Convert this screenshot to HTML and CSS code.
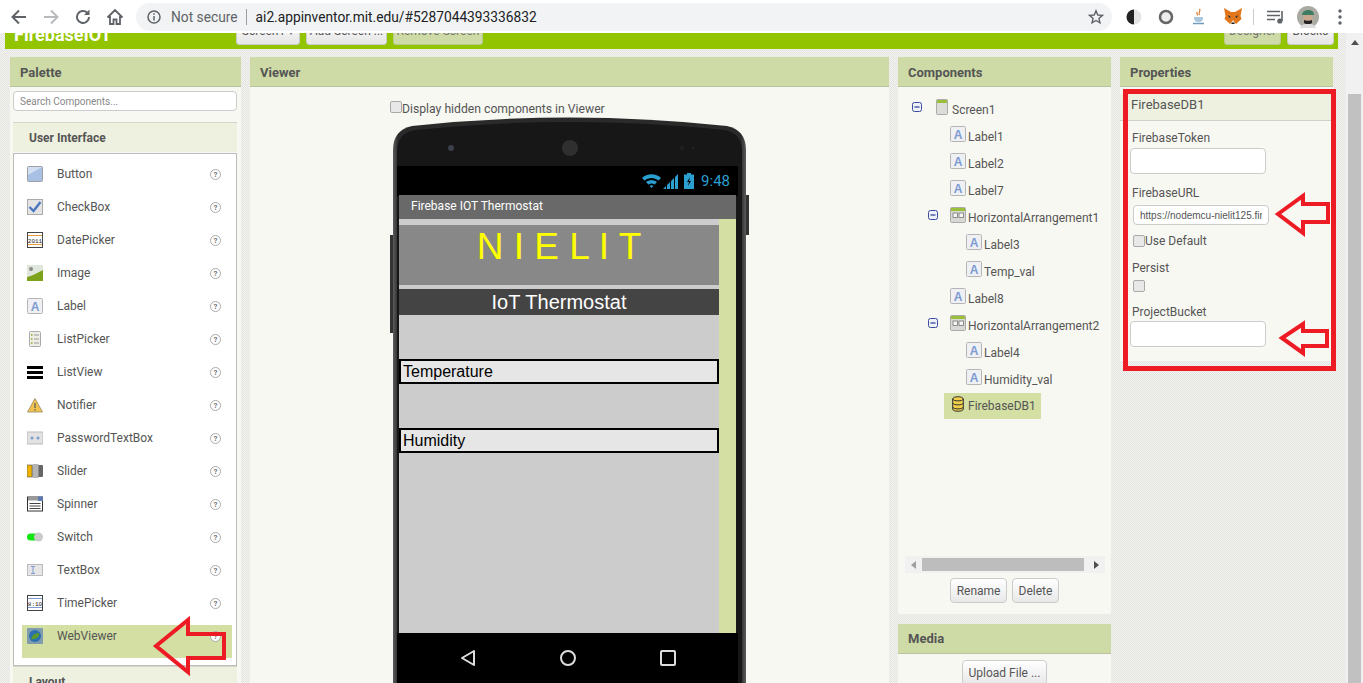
FILE: index.html
```html
<!DOCTYPE html>
<html lang="en">
<head>
    <meta charset="UTF-8">
    <meta name="viewport" content="width=device-width, initial-scale=1.0">
    <title>MIT App Inventor</title>
    <link rel="stylesheet" href="styles.css">
</head>
<body>
    <!-- icons used more than once -->
    <svg class="defs" width="0" height="0">
        <symbol id="ic-label" viewBox="0 0 16 16">
            <rect x="0.5" y="0.5" width="15" height="15" rx="1" fill="#eef0f4" stroke="#b5b5b5"/>
            <text x="8" y="12.5" text-anchor="middle" font-family="Liberation Sans" font-weight="700" font-size="12" fill="#7d9bd0">A</text>
        </symbol>
        <symbol id="ic-arrange" viewBox="0 0 16 16">
            <rect x="0.5" y="0.5" width="15" height="15" rx="1" fill="#d8d8d4" stroke="#aaa"/>
            <rect x="1" y="1" width="14" height="3" fill="#9cbf3a"/>
            <rect x="3" y="6" width="4.500" height="4.500" fill="#f4f4f4" stroke="#777" stroke-width="0.8"/>
            <rect x="9" y="6" width="4.500" height="4.500" fill="#f4f4f4" stroke="#777" stroke-width="0.8"/>
        </symbol>
        <symbol id="ic-minus" viewBox="0 0 10 10">
            <rect x="0.5" y="0.5" width="9" height="9" rx="2" fill="#eef0fa" stroke="#3a4aa0"/>
            <path d="M2.500 5h5" stroke="#2a3a90" stroke-width="1.200"/>
        </symbol>
    </svg>

    <div class="browser-bar">
        <svg class="nav-ic" width="18" height="18" viewBox="0 0 18 18"><path d="M16 9H3M9 2.500 2.500 9 9 15.500" fill="none" stroke="#5f6368" stroke-width="2"/></svg>
        <svg class="nav-ic" width="18" height="18" viewBox="0 0 18 18"><path d="M2 9h13M9 2.500 15.500 9 9 15.500" fill="none" stroke="#b8babd" stroke-width="2"/></svg>
        <svg class="nav-ic" width="18" height="18" viewBox="0 0 18 18"><path d="M15 9a6 6 0 1 1-1.800-4.300" fill="none" stroke="#5f6368" stroke-width="2"/><path d="M15.500 1.500v5.500h-5.500z" fill="#5f6368"/></svg>
        <svg class="nav-ic" width="18" height="18" viewBox="0 0 18 18"><path d="M1.500 9.500 9 2l7.500 7.500M4 8v8h3.500v-4.500h3V16H14V8" fill="none" stroke="#5f6368" stroke-width="1.800"/></svg>
        <div class="omnibox">
            <svg width="14" height="14" viewBox="0 0 14 14"><circle cx="7" cy="7" r="6" fill="none" stroke="#5f6368" stroke-width="1.500"/><path d="M7 6v4.500M7 3.300v1.500" stroke="#5f6368" stroke-width="1.500"/></svg>
            <span class="not-secure">Not secure</span>
            <span class="omni-sep"></span>
            <span class="url">ai2.appinventor.mit.edu/#5287044393336832</span>
            <svg class="star" width="16" height="16" viewBox="0 0 16 16"><path d="M8 1.800 9.800 6l4.600.4-3.500 3 1.100 4.500L8 11.500l-4 2.400 1.100-4.500-3.500-3L6.200 6z" fill="none" stroke="#5f6368" stroke-width="1.400"/></svg>
        </div>
        <div class="extensions">
            <svg class="ext-half" width="16" height="16" viewBox="0 0 16 16"><circle cx="8" cy="8" r="7.500" fill="#e4e4e4"/><path d="M8 .5a7.500 7.500 0 0 0 0 15z" fill="#222"/></svg>
            <svg class="ext-ring" width="16" height="16" viewBox="0 0 16 16"><circle cx="8" cy="8" r="6" fill="#eee" stroke="#666" stroke-width="2.500"/></svg>
            <svg class="ext-java" width="16" height="18" viewBox="0 0 16 18"><path d="M8.500 1c2 2-2 3 0 6M6 4c-1 1.500 1 2 .5 3.500" fill="none" stroke="#d9752a" stroke-width="1.200"/><path d="M3 9h9c0 4-1.500 5-4.500 5S3 13 3 9z" fill="#a9c6dc"/><path d="M2 15.500h11" stroke="#6e9cbd" stroke-width="1.500"/></svg>
            <svg class="ext-fox" width="18" height="17" viewBox="0 0 18 17"><path d="M0 0l7 4h4l7-4-1.500 8 1 3L12 16H6l-5.500-5 1-3z" fill="#e2761b"/><path d="M6 16l3-4 3 4z" fill="#f5e4d0"/><path d="M4 7l3 2-2 1zM14 7l-3 2 2 1z" fill="#233447"/><path d="M7.500 14.500h3V16h-3z" fill="#222"/></svg>
            <span class="ext-sep"></span>
            <svg class="ext-list" width="18" height="14" viewBox="0 0 18 14"><path d="M0 1.500h13M0 5.500h13M0 9.500h8" stroke="#5f6368" stroke-width="1.600"/><path d="M15 1v10" stroke="#5f6368" stroke-width="1.600"/><circle cx="12.800" cy="11" r="2.600" fill="#5f6368"/></svg>
            <svg class="avatar" width="22" height="22" viewBox="0 0 22 22"><circle cx="11" cy="11" r="11" fill="#a9aaa0"/><path d="M5 9c0-6 12-7 12 0z" fill="#3f7d63"/><path d="M6.500 9h9v5c0 2-2 3-4.500 3s-4.500-1-4.500-3z" fill="#c9a78e"/><path d="M7 14c2 1 6 1 8 0v3l-4 2-4-2z" fill="#222"/><path d="M3 22c1-4 5-4 8-4s7 0 8 4z" fill="#ddd"/></svg>
            <svg class="ext-dots" width="4" height="16" viewBox="0 0 4 16"><circle cx="2" cy="2" r="1.700" fill="#5f6368"/><circle cx="2" cy="8" r="1.700" fill="#5f6368"/><circle cx="2" cy="14" r="1.700" fill="#5f6368"/></svg>
        </div>
    </div>

    <div class="page">
        <div class="main">
            <div class="toolbar">
                <div class="app-title">FirebaseIOT</div>
                <div class="tb-left">
                    <button class="tb-btn w-screen">Screen1 ▾</button>
                    <button class="tb-btn w-add">Add Screen ...</button>
                    <button class="tb-btn off w-remove">Remove Screen</button>
                </div>
                <div class="tb-right">
                    <button class="tb-btn off w-designer">Designer</button>
                    <button class="tb-btn w-blocks">Blocks</button>
                </div>
            </div>

            <div class="panels">
                <!-- Palette -->
                <section class="panel palette">
                    <h2 class="panel-head">Palette</h2>
                    <input class="search" type="text" placeholder="Search Components...">
                    <h3 class="drawer-head">User Interface</h3>
                    <ul class="palette-list">
                        <li class="pal-item">
                            <svg class="pal-ic" viewBox="0 0 16 16"><rect x="0.5" y="0.5" width="15" height="15" rx="1" fill="#a8c0e4" stroke="#a0a0a0"/><path d="M1 1h14L1 9z" fill="#d2e0f4"/></svg>
                            <span class="pal-name">Button</span><span class="help">?</span>
                        </li>
                        <li class="pal-item">
                            <svg class="pal-ic" viewBox="0 0 16 16"><rect x="0.5" y="0.5" width="15" height="15" fill="#e4e4e4" stroke="#aaa"/><path d="M2.500 8l4 4 7-9" fill="none" stroke="#4a78c0" stroke-width="2.400"/></svg>
                            <span class="pal-name">CheckBox</span><span class="help">?</span>
                        </li>
                        <li class="pal-item">
                            <svg class="pal-ic" viewBox="0 0 16 16"><rect x="0.5" y="0.5" width="15" height="15" fill="#fff" stroke="#444"/><path d="M1 3.500h14M1 12.500h14" stroke="#e89a3c"/><text x="8" y="10.500" text-anchor="middle" font-family="Liberation Mono" font-size="6" fill="#222">2011</text></svg>
                            <span class="pal-name">DatePicker</span><span class="help">?</span>
                        </li>
                        <li class="pal-item">
                            <svg class="pal-ic" viewBox="0 0 16 16"><rect width="16" height="16" fill="#dfe6dc"/><circle cx="4" cy="4" r="2" fill="#888"/><path d="M0 12c5-1 10-4 16-7v11H0z" fill="#7da21c"/></svg>
                            <span class="pal-name">Image</span><span class="help">?</span>
                        </li>
                        <li class="pal-item">
                            <svg class="pal-ic"><use href="#ic-label"/></svg>
                            <span class="pal-name">Label</span><span class="help">?</span>
                        </li>
                        <li class="pal-item">
                            <svg class="pal-ic" viewBox="0 0 16 16"><rect x="2.500" y="0.500" width="11" height="15" rx="1" fill="#eeeee6" stroke="#aaa"/><path d="M7 4h5M7 8h5M7 12h5" stroke="#999"/><path d="M4 4h1.500M4 8h1.500M4 12h1.500" stroke="#8aab2a" stroke-width="1.500"/></svg>
                            <span class="pal-name">ListPicker</span><span class="help">?</span>
                        </li>
                        <li class="pal-item">
                            <svg class="pal-ic" viewBox="0 0 16 16"><path d="M0 2h16v3H0zM0 7h16v3H0zM0 12h16v3H0z" fill="#000"/></svg>
                            <span class="pal-name">ListView</span><span class="help">?</span>
                        </li>
                        <li class="pal-item">
                            <svg class="pal-ic" viewBox="0 0 16 16"><path d="M8 1.500 15.500 15H.5z" fill="#f2c14e" stroke="#a89a70"/><path d="M8 6v5M8 12v1.500" stroke="#6a6a5a" stroke-width="1.400"/></svg>
                            <span class="pal-name">Notifier</span><span class="help">?</span>
                        </li>
                        <li class="pal-item">
                            <svg class="pal-ic" viewBox="0 0 16 16"><rect y="2" width="16" height="12" fill="#e2e2e2" stroke="#bbb"/><circle cx="5" cy="8" r="1.500" fill="#7d9bd0"/><circle cx="11" cy="8" r="1.500" fill="#7d9bd0"/></svg>
                            <span class="pal-name">PasswordTextBox</span><span class="help">?</span>
                        </li>
                        <li class="pal-item">
                            <svg class="pal-ic" viewBox="0 0 16 16"><rect y="2" width="5" height="12" fill="#f0b400" stroke="#555" stroke-width="0.600"/><rect x="5" y="2" width="11" height="12" rx="1" fill="#666"/><rect x="5.500" y="1" width="6" height="14" fill="#b5b5b5"/></svg>
                            <span class="pal-name">Slider</span><span class="help">?</span>
                        </li>
                        <li class="pal-item">
                            <svg class="pal-ic" viewBox="0 0 16 16"><rect x="0.500" y="1" width="15" height="14" fill="#fff" stroke="#333"/><rect x="1" y="1.500" width="10" height="3" fill="#999"/><rect x="11" y="0.500" width="5" height="4.500" fill="#5a7ab0"/><path d="M2.500 7.500h11M2.500 10h11M2.500 12.500h11" stroke="#444"/></svg>
                            <span class="pal-name">Spinner</span><span class="help">?</span>
                        </li>
                        <li class="pal-item">
                            <svg class="pal-ic" viewBox="0 0 16 16"><rect y="4.500" width="14" height="7" rx="3.500" fill="#12e612"/><circle cx="11.500" cy="8" r="4.500" fill="#cbcbcb"/></svg>
                            <span class="pal-name">Switch</span><span class="help">?</span>
                        </li>
                        <li class="pal-item">
                            <svg class="pal-ic" viewBox="0 0 16 16"><rect x="0.500" y="2.500" width="15" height="11" fill="#e6e6e6" stroke="#bbb"/><path d="M4 4.500h4M4 11.500h4M6 4.500v7" stroke="#7d9bd0"/></svg>
                            <span class="pal-name">TextBox</span><span class="help">?</span>
                        </li>
                        <li class="pal-item">
                            <svg class="pal-ic" viewBox="0 0 16 16"><rect x="0.500" y="0.500" width="15" height="15" fill="#fff" stroke="#444"/><path d="M1 3.500h14M1 12.500h14" stroke="#7d9bd0"/><text x="8" y="10.500" text-anchor="middle" font-family="Liberation Mono" font-size="6" fill="#222">8:10</text></svg>
                            <span class="pal-name">TimePicker</span><span class="help">?</span>
                        </li>
                        <li class="pal-item picked">
                            <svg class="pal-ic" viewBox="0 0 16 16"><rect width="16" height="16" rx="1" fill="#7f9cae"/><circle cx="8" cy="8" r="6" fill="#2c6fb0"/><path d="M4 11c1-4 4-6 8-6 1 3-2 7-8 6z" fill="#5d9a2e"/></svg>
                            <span class="pal-name">WebViewer</span><span class="help">?</span>
                        </li>
                    </ul>
                    <h3 class="drawer-head">Layout</h3>
                </section>

                <!-- Viewer -->
                <section class="panel viewer">
                    <h2 class="panel-head">Viewer</h2>
                    <label class="hidden-toggle"><span class="check"></span>Display hidden components in Viewer</label>
                    <div class="phone">
                        <svg class="phone-shell" width="360" height="570" viewBox="0 0 360 570">
                            <defs>
                                <linearGradient id="rim" x1="0" x2="1" y1="0" y2="0">
                                    <stop offset="0" stop-color="#5c5c5c"/><stop offset="0.015" stop-color="#2a2a2a"/>
                                    <stop offset="0.985" stop-color="#2a2a2a"/><stop offset="1" stop-color="#5c5c5c"/>
                                </linearGradient>
                            </defs>
                            <rect x="0" y="119" width="4" height="98" fill="#333"/>
                            <rect x="356" y="79" width="3" height="40" fill="#333"/>
                            <path d="M3 570V34Q3 14 22 10 180-7 337 10 356 14 356 34V570z" fill="url(#rim)"/>
                            <path d="M7 570V36Q7 17 25 14 180-2 334 14 352 17 352 36V570z" fill="#171717"/>
                            <circle cx="61" cy="32" r="3" fill="#3c3f4c"/>
                            <circle cx="180" cy="32" r="8" fill="#2f2f2f"/>
                            <circle cx="292" cy="32" r="2.500" fill="#1f1f1f"/>
                            <circle cx="303" cy="32" r="1.500" fill="#222"/>
                        </svg>
                        <div class="screen">
                            <div class="status-bar">
                                <svg width="38" height="16" viewBox="0 0 38 16"><path d="M0 5c5-5 14-5 19 0l-2.500 2.500c-4-3.500-10-3.500-14 0zM4 9c3-2.500 8-2.500 11 0l-2.500 2.500c-2-1.500-4-1.500-6 0zM9.500 15 7.500 12.800c1-.7 3-.7 4 0z" fill="#2b9fd0"/><path d="M21 16h3v-3zM25 16h3V9l-3 3zM29 16h3V5l-3 3zM33 16h3V1l-3 3z" fill="#2b9fd0"/></svg>
                                <svg width="10" height="16" viewBox="0 0 10 16"><path d="M3 0h4v1.500h3V16H0V1.500h3z" fill="#2b9fd0"/><path d="M6 4 3 9h2l-1 4 3-5H5z" fill="#000"/></svg>
                                <span class="clock">9:48</span>
                            </div>
                            <div class="app-bar">Firebase IOT Thermostat</div>
                            <div class="app-body">
                                <div class="form">
                                    <div class="lbl-nielit">N I E L I T</div>
                                    <div class="lbl-iot">IoT Thermostat</div>
                                    <div class="lbl-row">Temperature</div>
                                    <div class="lbl-row second">Humidity</div>
                                </div>
                                <div class="form-side"></div>
                            </div>
                            <div class="nav-bar">
                                <svg width="16" height="18" viewBox="0 0 16 18"><path d="M14 2v14L2 9z" fill="none" stroke="#ddd" stroke-width="2" stroke-linejoin="round"/></svg>
                                <svg width="16" height="16" viewBox="0 0 16 16"><circle cx="8" cy="8" r="7" fill="none" stroke="#ddd" stroke-width="2"/></svg>
                                <svg width="16" height="16" viewBox="0 0 16 16"><rect x="1" y="1" width="14" height="14" rx="1" fill="none" stroke="#ddd" stroke-width="2"/></svg>
                            </div>
                        </div>
                    </div>
                </section>

                <!-- Components and Media -->
                <div class="right-col">
                    <section class="panel components">
                        <h2 class="panel-head">Components</h2>
                        <div class="tree">
                            <div class="row root">
                                <svg class="toggle"><use href="#ic-minus"/></svg>
                                <svg class="screen-ic" viewBox="0 0 12 16"><rect x="0.500" y="0.500" width="11" height="15" rx="1" fill="#dcdcd8" stroke="#aaa"/><rect x="1" y="1" width="10" height="3" fill="#9cbf3a"/></svg>
                                Screen1
                            </div>
                            <div class="row lvl1"><svg class="comp-ic"><use href="#ic-label"/></svg>Label1</div>
                            <div class="row lvl1"><svg class="comp-ic"><use href="#ic-label"/></svg>Label2</div>
                            <div class="row lvl1"><svg class="comp-ic"><use href="#ic-label"/></svg>Label7</div>
                            <div class="row branch"><svg class="toggle"><use href="#ic-minus"/></svg><svg class="comp-ic"><use href="#ic-arrange"/></svg>HorizontalArrangement1</div>
                            <div class="row lvl2"><svg class="comp-ic"><use href="#ic-label"/></svg>Label3</div>
                            <div class="row lvl2"><svg class="comp-ic"><use href="#ic-label"/></svg>Temp_val</div>
                            <div class="row lvl1"><svg class="comp-ic"><use href="#ic-label"/></svg>Label8</div>
                            <div class="row branch"><svg class="toggle"><use href="#ic-minus"/></svg><svg class="comp-ic"><use href="#ic-arrange"/></svg>HorizontalArrangement2</div>
                            <div class="row lvl2"><svg class="comp-ic"><use href="#ic-label"/></svg>Label4</div>
                            <div class="row lvl2"><svg class="comp-ic"><use href="#ic-label"/></svg>Humidity_val</div>
                            <div class="row picked-row">
                                <svg class="db-ic" viewBox="0 0 12 16"><path d="M.7 3c0-3 10.600-3 10.600 0v10c0 3-10.600 3-10.600 0z" fill="#f2cf4a" stroke="#333"/><path d="M.7 3c0 2.500 10.600 2.500 10.600 0M.7 7c0 2.500 10.600 2.500 10.600 0M.7 11c0 2.500 10.600 2.500 10.600 0" fill="none" stroke="#333"/></svg>
                                FirebaseDB1
                            </div>
                        </div>
                        <div class="hscroll">
                            <span class="tri-left"></span>
                            <span class="hthumb"></span>
                            <span class="tri-right"></span>
                        </div>
                        <div class="comp-btns">
                            <button class="gray-btn">Rename</button>
                            <button class="gray-btn">Delete</button>
                        </div>
                    </section>
                    <section class="panel media">
                        <h2 class="panel-head media-head">Media</h2>
                        <div class="media-body"><button class="gray-btn">Upload File ...</button></div>
                    </section>
                </div>

                <!-- Properties -->
                <section class="panel properties">
                    <h2 class="panel-head">Properties</h2>
                    <div class="prop-title">FirebaseDB1</div>
                    <div class="prop-list">
                        <div class="prop-name">FirebaseToken</div>
                        <input class="prop-input" type="text">
                        <div class="prop-name url-name">FirebaseURL</div>
                        <input class="prop-input url-input" type="text" value="https://nodemcu-nielit125.firebaseio.com/">
                        <label class="use-default"><span class="check"></span>Use Default</label>
                        <div class="prop-name persist-name">Persist</div>
                        <span class="check persist-check"></span>
                        <div class="prop-name bucket-name">ProjectBucket</div>
                        <input class="prop-input bucket-input" type="text">
                    </div>
                </section>
            </div>
        </div>
        <div class="scrollbar">
            <span class="tri-up"></span>
            <span class="vthumb"></span>
        </div>
    </div>

    <!-- red markup drawn over the screenshot -->
    <svg class="markup" width="1363" height="683" viewBox="0 0 1363 683">
        <rect x="1125.500" y="91.500" width="208" height="277" fill="none" stroke="#ed1c24" stroke-width="5"/>
        <path d="M156 646 188 620V634H224V658H188V672Z" fill="none" stroke="#ed1c24" stroke-width="4"/>
        <path d="M1278 214 1303 196V204H1328V222H1303V233Z" fill="none" stroke="#ed1c24" stroke-width="4"/>
        <path d="M1282 338 1303 324V331H1327V346H1303V353Z" fill="none" stroke="#ed1c24" stroke-width="4"/>
    </svg>
</body>
</html>
```

FILE: styles.css
```css
* {
  box-sizing: border-box;
}
html, body {
  height: 683px;
  overflow: hidden;
}
body {
  margin: 0;
  position: relative;
  font-family: Roboto, "Liberation Sans", sans-serif;
  font-size: 12px;
  color: #555;
  background: #fff;
}
.defs {
  display: block;
  height: 0;
}

/* browser chrome */
.browser-bar {
  height: 33px;
  display: flex;
  align-items: center;
  padding-left: 10px;
  background: #fff;
}
.nav-ic {
  margin-right: 14px;
  flex: none;
}
.omnibox {
  width: 976px;
  height: 28px;
  margin-left: -2px;
  border-radius: 14px;
  background: #f1f3f4;
  display: flex;
  align-items: center;
  padding: 0 8px 0 11px;
  font-size: 13.750px;
}
.not-secure {
  margin-left: 10px;
  color: #5f6368;
}
.omni-sep {
  width: 1px;
  height: 16px;
  margin: 0 9px 0 8px;
  background: #9a9ea3;
}
.url {
  color: #202124;
}
.star {
  margin-left: auto;
}
.extensions {
  flex: 1;
  display: flex;
  align-items: center;
  padding-left: 14px;
}
.ext-ring {
  margin-left: 16px;
}
.ext-java {
  margin-left: 17px;
}
.ext-fox {
  margin-left: 17px;
}
.ext-sep {
  width: 1px;
  height: 16px;
  margin-left: 11px;
  background: #ccc;
}
.ext-list {
  margin-left: 13px;
}
.avatar {
  margin-left: 12px;
  flex: none;
}
.ext-dots {
  margin-left: 19px;
}

/* page */
.page {
  display: flex;
  height: 650px;
}
.main {
  width: 1346px;
  background: conic-gradient(#e2e2e0 25%, #f4f4f1 0 50%, #e2e2e0 0 75%, #f4f4f1 0) 0 0 / 2px 2px;
}
.scrollbar {
  width: 17px;
  background: #f1f1f1;
  display: flex;
  flex-direction: column;
  align-items: center;
  padding-top: 7px;
}
.tri-up {
  width: 0;
  height: 0;
  border: 4px solid transparent;
  border-top: 0;
  border-bottom: 5px solid #505050;
}
.vthumb {
  width: 13px;
  flex: 1;
  margin-top: 49px;
  background: #c1c1c1;
}

.toolbar {
  height: 16px;
  width: 1333px;
  margin-left: 5px;
  background: #92c400;
  display: flex;
  align-items: flex-end;
  overflow: hidden;
  padding-bottom: 4px;
}
.app-title {
  width: 231px;
  padding-left: 9px;
  color: #fff;
  font-size: 18px;
  font-weight: 700;
  line-height: 22px;
  flex: none;
  margin-bottom: -1px;
}
.tb-left, .tb-right {
  display: flex;
  gap: 6px;
  flex: none;
}
.tb-right {
  margin-left: auto;
  margin-right: 4px;
}
.tb-btn {
  height: 29px;
  padding: 0;
  font-family: Roboto, sans-serif;
  font-size: 12px;
  color: #555;
  border: 1px solid #ccc;
  border-radius: 3px;
  background: linear-gradient(#fff, #e6e6e6);
  flex: none;
}
.tb-btn.off {
  background: #cedba7;
  border-color: #b9c895;
  color: #777;
}
.w-screen { width: 64px; }
.w-add { width: 81px; }
.w-remove { width: 90px; }
.w-designer { width: 57px; }
.w-blocks { width: 47px; }

.panels {
  display: grid;
  grid-template-columns: 231px 639px 213px 213px;
  gap: 9px;
  padding: 8px 10px;
  align-items: start;
}
.panel {
  background: #f8f8f2;
}
.panel-head {
  margin: 0;
  height: 30px;
  line-height: 31px;
  padding-left: 10px;
  background: #cedba7;
  border-bottom: 1px solid #b9c3a0;
  font-size: 13px;
  font-weight: 700;
  color: #555;
}

/* palette */
.palette {
  padding-bottom: 4px;
}
.search {
  display: block;
  width: 224px;
  height: 20px;
  margin: 4px 0 11px 3px;
  padding: 0 6px;
  border: 1px solid #ccc;
  border-radius: 4px;
  font-family: Roboto, sans-serif;
  font-size: 10px;
  background: #fff;
}
.search::placeholder {
  color: #888;
}
.drawer-head {
  margin: 0 0 0 3px;
  width: 224px;
  height: 30px;
  line-height: 30px;
  padding-left: 16px;
  background: #eef1e0;
  border-top: 1px solid #d5d8c8;
  font-size: 12px;
  font-weight: 700;
  color: #555;
}
.palette-list {
  list-style: none;
  margin: 1px 0 0 3px;
  padding: 4px 5px 8px 9px;
  width: 224px;
  height: 513px;
  background: #fff;
  border: 1px solid #bbb;
}
.pal-item {
  height: 33px;
  display: flex;
  align-items: center;
  padding-left: 4px;
  padding-bottom: 1px;
}
.pal-item.picked {
  margin: 5px -1px 0;
  padding-left: 5px;
  padding-bottom: 11px;
  background: #d3dfa3;
}
.pal-ic {
  width: 16px;
  height: 16px;
  flex: none;
}
.pal-name {
  margin-left: 14px;
  flex: 1;
}
.help {
  width: 11px;
  height: 11px;
  margin-right: 10px;
  border: 1px solid #aaa;
  border-radius: 50%;
  font-size: 8px;
  font-weight: 700;
  line-height: 9px;
  text-align: center;
  color: #777;
  background: #fff;
}
.picked .help {
  margin-right: 11px;
}

/* viewer */
.viewer {
  height: 700px;
}
.check {
  display: inline-block;
  width: 12px;
  height: 12px;
  border: 1px solid #aaa;
  border-radius: 2px;
  background: #e8e8e8;
  flex: none;
}
.hidden-toggle {
  display: flex;
  align-items: center;
  height: 15px;
  margin: 14px 0 0 140px;
  font-size: 12.200px;
}
.hidden-toggle .check {
  margin-top: -4px;
}
.phone {
  position: relative;
  width: 360px;
  height: 570px;
  margin: 0 0 0 140px;
}
.phone-shell {
  position: absolute;
  left: 0;
  top: 0;
}
.screen {
  position: relative;
  width: 341px;
  margin-left: 7px;
  padding-top: 50px;
}
.status-bar {
  height: 30px;
  background: #000;
  display: flex;
  align-items: center;
  justify-content: flex-end;
  gap: 4px;
  padding-right: 8px;
}
.clock {
  margin-left: 3px;
  color: #2b9fd0;
  font-size: 15px;
}
.app-bar {
  height: 24px;
  margin: -1px 2px 0;
  line-height: 22px;
  padding-left: 12px;
  background: #696969;
  color: #fff;
  font-size: 12px;
}
.app-body {
  display: flex;
  height: 414px;
  margin: 0 2px;
}
.form {
  width: 320px;
  background: #ccc;
  padding-top: 6px;
  font-family: "Liberation Sans", Arial, sans-serif;
}
.form-side {
  flex: 1;
  background: #d3dfa3;
}
.lbl-nielit {
  height: 60px;
  line-height: 44px;
  background: #888;
  color: #ff0;
  font-size: 37px;
  text-align: center;
}
.lbl-iot {
  height: 26px;
  margin-top: 4px;
  line-height: 26px;
  background: #444;
  color: #fff;
  font-size: 20px;
  text-align: center;
}
.lbl-row {
  height: 25px;
  margin-top: 44px;
  border: 2px solid #000;
  background: #e6e6e6;
  color: #000;
  font-size: 16px;
  line-height: 21px;
  padding-left: 2px;
}
.nav-bar {
  height: 50px;
  background: #000;
  display: flex;
  align-items: center;
  justify-content: center;
  gap: 84px;
}

/* components */
.right-col {
  display: flex;
  flex-direction: column;
  gap: 10px;
}
.components {
  height: 557px;
}
.tree {
  height: 469px;
  padding-top: 9px;
  font-size: 12px;
}
.row {
  height: 27px;
  display: flex;
  align-items: center;
}
.toggle {
  width: 10px;
  height: 10px;
  margin-bottom: 6px;
  flex: none;
}
.root {
  padding-left: 14px;
}
.root .toggle {
  margin-right: 14px;
}
.screen-ic {
  width: 12px;
  height: 16px;
  margin: 0 4px 6px 0;
  flex: none;
}
.comp-ic {
  width: 16px;
  height: 16px;
  margin: 0 2px 6px 0;
  flex: none;
}
.lvl1 {
  padding-left: 52px;
}
.lvl2 {
  padding-left: 68px;
}
.branch {
  padding-left: 30px;
}
.branch .toggle {
  margin-right: 12px;
}
.picked-row {
  width: 97px;
  height: 26px;
  margin-left: 46px;
  padding-left: 8px;
  background: #d3dfa3;
}
.db-ic {
  width: 12px;
  height: 16px;
  margin: 0 4px 5px 0;
  flex: none;
}
.hscroll {
  display: flex;
  align-items: center;
  width: 200px;
  height: 17px;
  margin-left: 7px;
  background: #f1f1f1;
  padding: 0 6px;
}
.hthumb {
  flex: 1;
  height: 13px;
  margin: 0 10px 0 6px;
  background: #bdbdbd;
}
.tri-left {
  border: 4px solid transparent;
  border-left: 0;
  border-right: 5px solid #a0a0a0;
}
.tri-right {
  border: 4px solid transparent;
  border-right: 0;
  border-left: 5px solid #505050;
}
.comp-btns {
  display: flex;
  justify-content: center;
  gap: 5px;
  margin-top: 5px;
}
.gray-btn {
  height: 25px;
  padding: 0 5.500px;
  font-family: Roboto, sans-serif;
  font-size: 12px;
  color: #555;
  border: 1px solid #ccc;
  border-radius: 4px;
  background: linear-gradient(#fff, #e8e8e8);
}
.media-head {
  line-height: 29px;
}
.media-body {
  height: 70px;
  padding-top: 6px;
  text-align: center;
}

/* properties */
.prop-title {
  height: 27px;
  margin: 7px 0 0;
  padding-left: 11px;
  line-height: 22px;
  background: #eef1e0;
  border-bottom: 1px solid #d0d0c8;
  font-size: 13px;
}
.properties {
  height: 304px;
}
.prop-list {
  padding: 9px 0 0 10px;
}
.prop-name {
  height: 16px;
  line-height: 16px;
  padding-left: 2px;
}
.prop-input {
  display: block;
  width: 136px;
  height: 26px;
  margin-top: 2px;
  border: 1px solid #ccc;
  border-radius: 4px;
  background: #fff;
  font-family: "Liberation Sans", Arial, sans-serif;
  font-size: 10px;
  color: #555;
}
.url-name {
  margin-top: 11px;
}
.url-input {
  height: 20px;
  margin: 4px 0 0 3px;
  padding: 0 6px;
}
.use-default {
  display: flex;
  align-items: center;
  height: 16px;
  margin: 8px 0 0 3px;
}
.persist-name {
  margin-top: 11px;
}
.persist-check {
  display: block;
  margin: 4px 0 0 3px;
}
.bucket-name {
  margin-top: 12px;
}
.bucket-input {
  margin-top: 1px;
}

.markup {
  position: absolute;
  left: 0;
  top: 0;
  pointer-events: none;
}
```
